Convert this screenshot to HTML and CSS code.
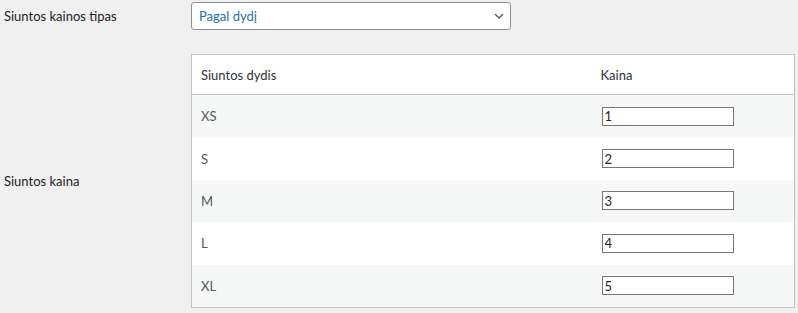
FILE: index.html
```html
<!DOCTYPE html>
<html>
<head>
    <title>Siuntos nustatymai</title>
    <link rel="stylesheet" href="styles.css">
</head>
<body>
    <div class="settings">
        <label class="field-label" for="priceType">Siuntos kainos tipas</label>
        <div class="select-wrap">
            <select id="priceType" class="select">
                <option>Pagal dydį</option>
                <option>Fiksuota</option>
            </select>
            <svg class="chevron" width="10" height="6" viewBox="0 0 10 6">
                <polyline points="1,1 5,5 9,1" fill="none" stroke="#50575e" stroke-width="1.3"/>
            </svg>
        </div>

        <div class="field-label price-label">Siuntos kaina</div>
        <table class="size-table">
            <colgroup>
                <col class="col-size">
                <col class="col-price">
            </colgroup>
            <thead>
                <tr>
                    <th>Siuntos dydis</th>
                    <th>Kaina</th>
                </tr>
            </thead>
            <tbody>
                <tr class="alt"><td>XS</td><td><input type="text" class="price-input" value="1"></td></tr>
                <tr><td>S</td><td><input type="text" class="price-input" value="2"></td></tr>
                <tr class="alt"><td>M</td><td><input type="text" class="price-input" value="3"></td></tr>
                <tr><td>L</td><td><input type="text" class="price-input" value="4"></td></tr>
                <tr class="alt"><td>XL</td><td><input type="text" class="price-input" value="5"></td></tr>
            </tbody>
        </table>
    </div>
</body>
</html>
```

FILE: styles.css
```css
body {
    margin: 0;
    background: #f0f0f1;
    font-family: Lato, "Noto Sans", sans-serif;
    font-size: 13px;
    color: #1d2327;
}
.settings {
    display: grid;
    grid-template-columns: 191px 604px;
    row-gap: 24px;
    padding-top: 2px;
}
.field-label {
    align-self: center;
    padding-left: 4px;
}
.select-wrap {
    position: relative;
    width: 320px;
}
.select {
    appearance: none;
    -webkit-appearance: none;
    display: block;
    width: 100%;
    height: 28px;
    box-sizing: border-box;
    margin: 0;
    padding: 0 24px 0 7px;
    border: 1px solid #8c8f94;
    border-radius: 3px;
    background: #fff;
    color: #2271b1;
    font: inherit;
}
.chevron {
    position: absolute;
    right: 7px;
    top: 11px;
}
.size-table {
    width: 604px;
    table-layout: fixed;
    border-collapse: collapse;
    border: 1px solid #c3c4c7;
    background: #fff;
    box-shadow: 0 1px 1px rgba(0, 0, 0, 0.04);
}
.col-size {
    width: 400px;
}
.size-table th {
    height: 39px;
    padding: 0 9px;
    text-align: left;
    font-weight: normal;
    color: #2c3338;
    border-bottom: 1px solid #c3c4c7;
}
.size-table td {
    height: 42.4px;
    padding: 0 9px;
    color: #50575e;
}
.size-table tr.alt {
    background: #f6f7f7;
}
.price-input {
    display: block;
    width: 132px;
    height: 19px;
    box-sizing: border-box;
    margin: 0 0 0 1px;
    padding: 0 2px;
    border: 1px solid #767676;
    border-radius: 0;
    background: #fff;
    font-family: Lato, "Noto Sans", sans-serif;
    font-size: 13px;
    color: #1d2327;
}
```
